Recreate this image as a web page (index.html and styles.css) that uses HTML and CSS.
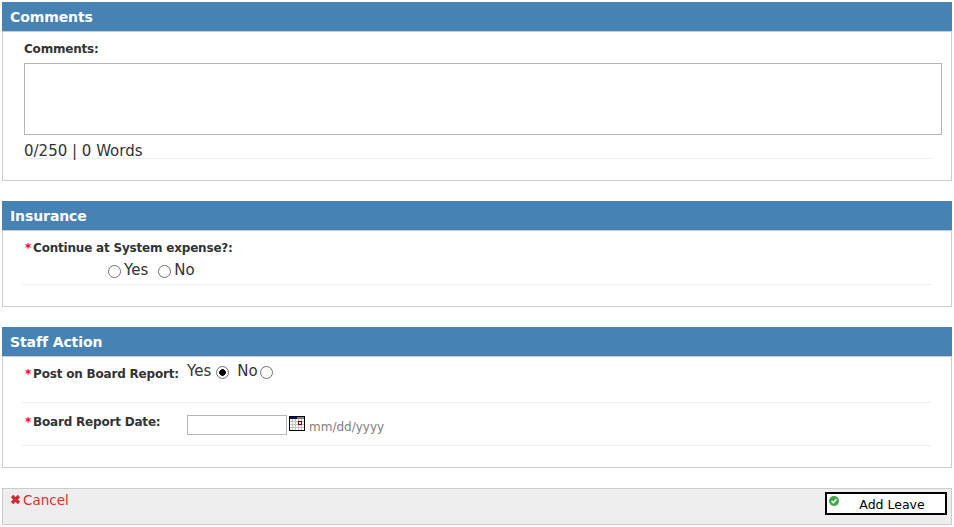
FILE: index.html
```html
<!DOCTYPE html>
<html lang="en">
<head>
    <meta charset="UTF-8">
    <title>Add Leave</title>
    <link rel="stylesheet" href="styles.css">
</head>
<body>
    <section class="panel panel-comments">
        <h2 class="panel-title">Comments</h2>
        <div class="panel-body">
            <label class="comments-label" for="comments">Comments:</label>
            <textarea class="comments-box" id="comments"></textarea>
            <div class="row counter-row">0/250 | 0 Words</div>
        </div>
    </section>

    <section class="panel panel-insurance">
        <h2 class="panel-title">Insurance</h2>
        <div class="panel-body">
            <div class="row insurance-row">
                <div class="field-label"><span class="req">*</span>Continue at System expense?:</div>
                <div class="insurance-options">
                    <input type="radio" name="expense" class="radio"><span class="opt">Yes</span>
                    <input type="radio" name="expense" class="radio radio-second"><span class="opt">No</span>
                </div>
            </div>
        </div>
    </section>

    <section class="panel panel-staff">
        <h2 class="panel-title">Staff Action</h2>
        <div class="panel-body">
            <div class="row post-row">
                <div class="field-label label-col"><span class="req">*</span>Post on Board Report:</div>
                <div class="post-options">
                    <span class="opt">Yes</span><input type="radio" name="post" class="radio" checked>
                    <span class="opt opt-no">No</span><input type="radio" name="post" class="radio radio-last">
                </div>
            </div>
            <div class="row date-row">
                <div class="field-label label-col"><span class="req">*</span>Board Report Date:</div>
                <input type="text" class="date-input">
                <svg class="cal-icon" width="16" height="15" viewBox="0 0 16 15">
                    <rect x="0" y="0" width="16" height="15" fill="#000"/>
                    <rect x="1" y="1" width="14" height="13" fill="#fff"/>
                    <rect x="1" y="1" width="7" height="2" fill="#000080"/>
                    <rect x="8" y="1" width="7" height="2" fill="#808080"/>
                    <path d="M1 5.5H15M1 8.5H15M1 11.5H15M3.5 3V14M6.5 3V14M9.5 3V14M12.5 3V14" stroke="#c4c4c4" stroke-width="1"/>
                    <rect x="9.5" y="5.5" width="3" height="3" fill="#fff" stroke="#800000"/>
                </svg>
                <span class="date-hint">mm/dd/yyyy</span>
            </div>
        </div>
    </section>

    <footer class="actions">
        <a class="cancel" href="#">
            <svg class="cancel-icon" width="11" height="11" viewBox="0 0 11 11">
                <path d="M2 2L9 9M9 2L2 9" stroke="#c8303a" stroke-width="3.4"/>
            </svg>Cancel
        </a>
        <button class="add-btn" type="button">
            <svg class="check-icon" width="10" height="10" viewBox="0 0 10 10">
                <circle cx="5" cy="5" r="5" fill="#3fa648"/>
                <path d="M2.6 5L4.4 6.8L7.5 3.2" fill="none" stroke="#fff" stroke-width="1.6"/>
            </svg>Add Leave
        </button>
    </footer>
</body>
</html>
```

FILE: styles.css
```css
* {
    box-sizing: border-box;
}

body {
    margin: 0;
    padding: 2px;
    background: #fff;
    color: #333;
    font-family: "DejaVu Sans", Verdana, sans-serif;
    font-size: 14px;
}

.panel {
    margin-bottom: 20px;
    width: 950px;
}

.panel-title {
    margin: 0;
    height: 29px;
    padding-left: 8px;
    background: #4682b4;
    color: #fff;
    font-size: 14px;
    font-weight: bold;
    letter-spacing: -0.1px;
    line-height: 31px;
}

.panel-body {
    border: 1px solid #ccc;
    padding: 0 19px;
}

.panel-comments .panel-body {
    height: 150px;
    padding-top: 10px;
}

.panel-insurance .panel-body {
    height: 77px;
}

.panel-staff .panel-body {
    height: 112px;
}

.row {
    border-bottom: 1px solid #eee;
}

.comments-label {
    display: block;
    height: 21px;
    padding-left: 2px;
    font-size: 12px;
    font-weight: bold;
    letter-spacing: -0.2px;
    line-height: 15px;
}

.comments-box {
    display: block;
    width: 918px;
    height: 72px;
    margin-left: 2px;
    border: 1px solid #b5b5b5;
    resize: none;
}

.counter-row {
    height: 24px;
    padding-left: 2px;
    font-size: 15px;
    line-height: 32px;
}

.field-label {
    font-size: 12px;
    font-weight: bold;
    letter-spacing: -0.2px;
    line-height: 15px;
}

.req {
    color: #f00;
    margin-left: 3px;
    margin-right: 2px;
}

.insurance-row {
    height: 54px;
    padding-top: 10px;
}

.insurance-options {
    display: flex;
    align-items: flex-start;
    height: 22px;
    padding-left: 86px;
    margin-top: 4px;
}

.insurance-options .opt {
    margin-top: 1px;
}

.radio {
    appearance: none;
    width: 13px;
    height: 13px;
    margin: 0;
    border: 1px solid #707070;
    border-radius: 50%;
    background: #fff;
}

.radio:checked {
    background: radial-gradient(circle, #000 0, #000 3px, #fff 3.6px);
}

.insurance-options .radio {
    margin-top: 5px;
    margin-right: 3px;
}

.insurance-options .radio-second {
    margin-left: 10px;
}

.opt {
    font-size: 15px;
}

.post-row {
    display: flex;
    height: 46px;
    padding-top: 9px;
}

.post-row .field-label {
    padding-top: 1px;
}

.post-options {
    display: flex;
    align-items: center;
    height: 9px;
}

.post-options .radio {
    margin-left: 5px;
    margin-top: 3px;
}

.post-options .radio-last {
    margin-left: 2px;
}

.label-col {
    width: 165px;
    flex: none;
}

.opt-no {
    margin-left: 8px;
}

.date-row {
    display: flex;
    align-items: flex-start;
    height: 43px;
    padding-top: 11px;
}

.date-row .field-label {
    padding-top: 1px;
}

.date-input {
    width: 100px;
    height: 20px;
    margin-top: 1px;
    border: 1px solid #b5b5b5;
    padding: 0;
}

.cal-icon {
    margin-left: 2px;
    margin-top: 2px;
}

.date-hint {
    margin-left: 4px;
    margin-top: 6px;
    color: #808080;
    font-size: 12px;
}

.actions {
    display: flex;
    justify-content: space-between;
    width: 950px;
    height: 37px;
    border: 1px solid #ccc;
    background: #eee;
    padding: 3px 4px 0 7px;
}

.cancel {
    color: #dc2f2f;
    font-size: 13.5px;
    line-height: 16px;
    text-decoration: none;
}

.cancel-icon {
    margin-right: 2px;
}

.add-btn {
    position: relative;
    width: 122px;
    height: 23px;
    margin: 0;
    padding: 1px 0 0 12px;
    border: 2px solid #000;
    background: #fff;
    color: #000;
    font-family: "DejaVu Sans", Verdana, sans-serif;
    font-size: 12.5px;
}

.check-icon {
    position: absolute;
    left: 2px;
    top: 2px;
}
```
